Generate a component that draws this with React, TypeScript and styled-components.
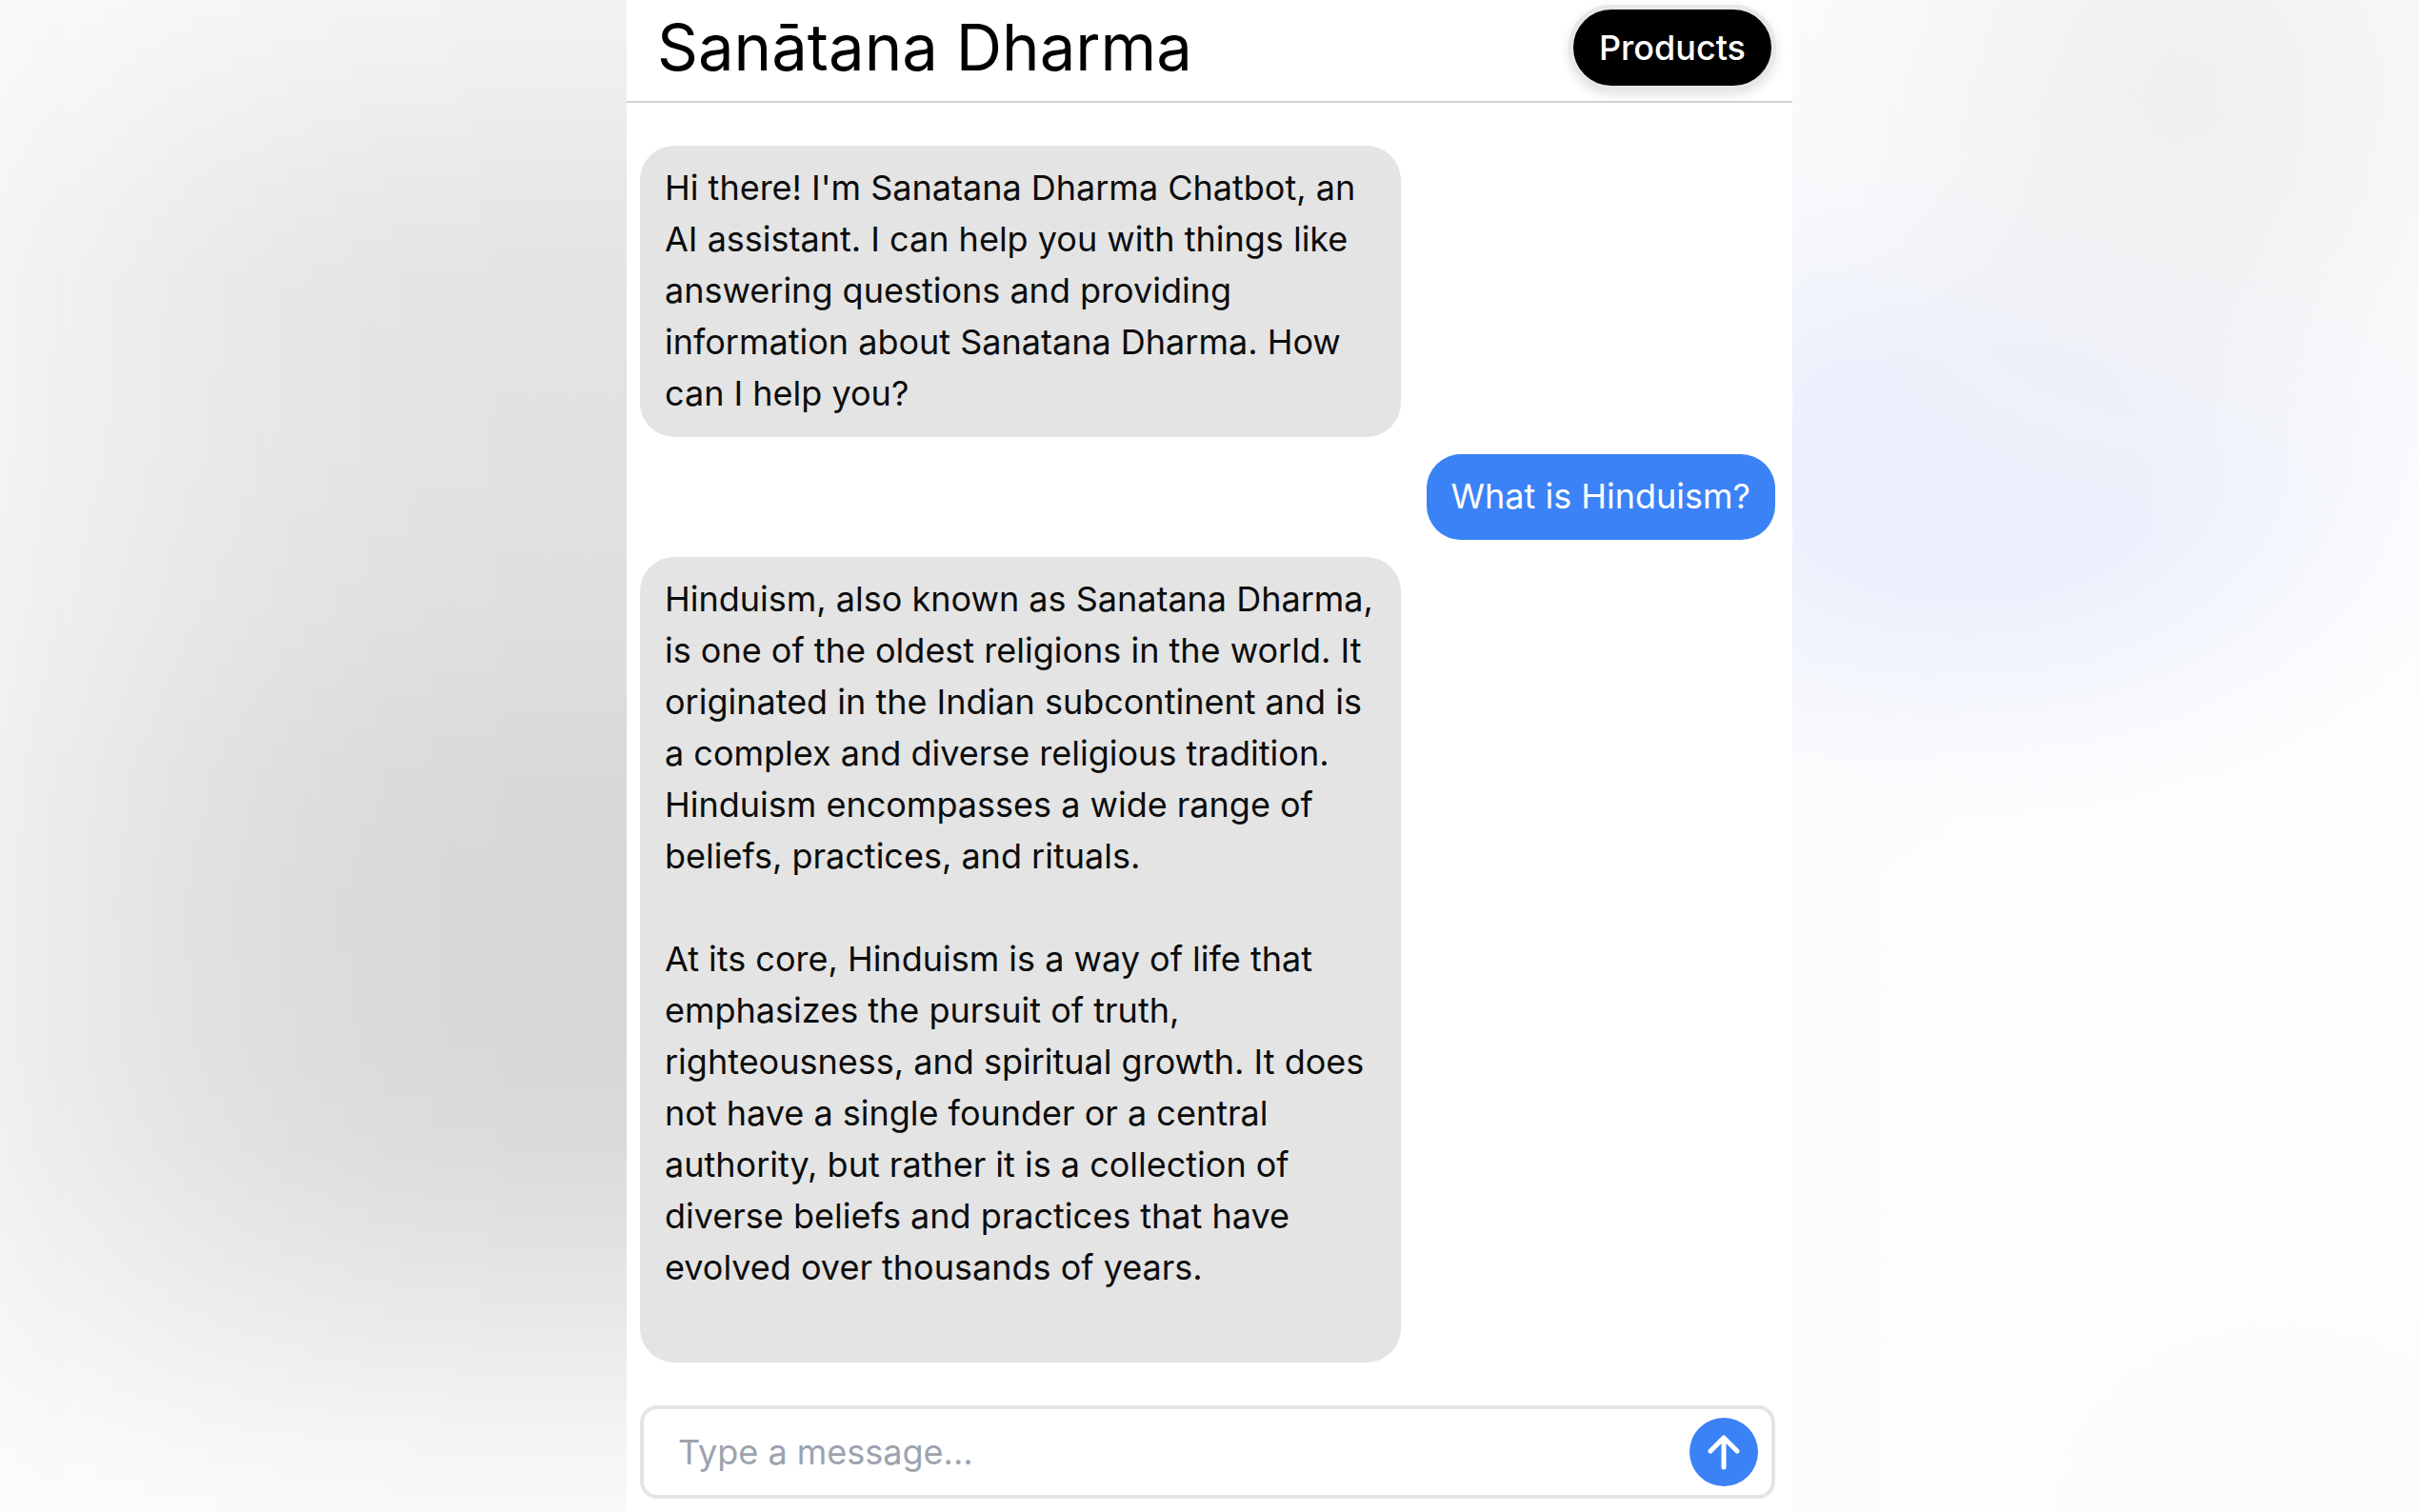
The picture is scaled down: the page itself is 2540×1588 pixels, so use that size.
import React, { useState } from "react";
import styled, { createGlobalStyle } from "styled-components";

const GlobalStyle = createGlobalStyle`
  * {
    box-sizing: border-box;
  }

  body {
    margin: 0;
    background: #fefefe;
    color: #0c0c0c;
    font-family: Inter, "Liberation Sans", sans-serif;
    font-size: 36px;
    line-height: 54px;
  }
`;

const Page = styled.div`
  display: flex;
  height: 100vh;
  overflow: hidden;
`;

const GreyGlow = styled.div`
  flex: 1 1 0;
  background: linear-gradient(
    to bottom,
    #f3f3f3 0%,
    #eeeeee 6%,
    #e8e8e8 12%,
    #e3e3e3 19%,
    #e2e2e2 30%,
    #dfdfdf 40%,
    #d9d9d9 51%,
    #d7d7d7 60%,
    #d8d8d8 70%,
    #dbdbdb 76%,
    #e3e3e3 83%,
    #ebebeb 89%,
    #f4f4f4 95%,
    #f9f9f9 100%
  );
  mask-image: linear-gradient(
    to right,
    rgba(0, 0, 0, 0.36) 0%,
    rgba(0, 0, 0, 0.56) 15%,
    rgba(0, 0, 0, 0.72) 30%,
    rgba(0, 0, 0, 0.85) 46%,
    rgba(0, 0, 0, 0.94) 62%,
    #000 85%
  );
`;

const BlueGlow = styled.div`
  flex: 1 1 0;
  background:
    radial-gradient(
      ellipse 72% 30% at 62% 6%,
      rgba(236, 236, 236, 0.8) 0%,
      rgba(238, 238, 238, 0.6) 40%,
      rgba(244, 244, 244, 0.25) 75%,
      rgba(250, 250, 250, 0) 100%
    ),
    radial-gradient(
      ellipse 100% 27% at 28% 31%,
      #eceffc 0%,
      #eceffc 28%,
      rgba(240, 243, 253, 0.8) 50%,
      rgba(246, 249, 254, 0.5) 75%,
      rgba(252, 253, 255, 0) 100%
    ),
    radial-gradient(
      ellipse 52% 18% at 78% 100%,
      #fafcfe 0%,
      #fafcfe 60%,
      rgba(252, 254, 255, 0) 100%
    ),
    linear-gradient(to right, #fbfbfb, #fefefe 30%);
`;

const Chat = styled.main`
  display: flex;
  flex-direction: column;
  width: 100%;
  max-width: 1224px;
  background: #fff;
`;

const Header = styled.header`
  display: flex;
  align-items: center;
  justify-content: space-between;
  padding: 5px 17px 11px 32px;
  border-bottom: 2px solid #d2d2d2;
`;

const Title = styled.h1`
  margin: 0;
  color: #000;
  font-size: 67px;
  font-weight: 400;
  line-height: 90px;
`;

const ProductsButton = styled.button`
  height: 90px;
  padding: 0 27px;
  border: 5px solid #e5e7eb;
  border-radius: 45px;
  background: #000;
  box-shadow: 0 4px 12px rgba(0, 0, 0, 0.12);
  color: #fff;
  font: inherit;
  font-weight: 500;
  cursor: pointer;
`;

const Messages = styled.section`
  display: flex;
  flex: 1 1 0;
  flex-direction: column;
  gap: 18px;
  min-height: 0;
  padding: 45px 18px 0 14px;
  overflow: hidden;
`;

const Bubble = styled.p<{ $mine?: boolean }>`
  flex: none;
  align-self: ${({ $mine }) => ($mine ? "flex-end" : "flex-start")};
  max-width: 67%;
  margin: 0;
  padding: 17px 26px 19px;
  border-radius: 36px;
  background: ${({ $mine }) => ($mine ? "#3b82f6" : "#e4e4e4")};
  color: ${({ $mine }) => ($mine ? "#fff" : "inherit")};
  white-space: pre-wrap;
`;

const Composer = styled.form`
  display: flex;
  align-items: center;
  margin: 0 18px 14px 14px;
  padding: 9px 14px 9px 36px;
  border: 4px solid #e4e4e4;
  border-radius: 18px;
  background: #fff;
`;

const MessageInput = styled.input`
  flex: 1;
  min-width: 0;
  padding: 0;
  border: 0;
  outline: 0;
  background: transparent;
  color: inherit;
  font: inherit;

  &::placeholder {
    color: #9ca3af;
    opacity: 1;
  }
`;

const SendButton = styled.button`
  display: grid;
  place-items: center;
  width: 72px;
  height: 72px;
  padding: 0;
  border: 0;
  border-radius: 50%;
  background: #3b82f6;
  color: #fff;
  cursor: pointer;
`;

type Message = { id: number; mine: boolean; text: string };

const conversation: Message[] = [
  {
    id: 1,
    mine: false,
    text: "Hi there! I'm Sanatana Dharma Chatbot, an AI assistant. I can help you with things like answering questions and providing information about Sanatana Dharma. How can I help you?",
  },
  { id: 2, mine: true, text: "What is Hinduism?" },
  {
    id: 3,
    mine: false,
    text: "Hinduism, also known as Sanatana Dharma, is one of the oldest religions in the world. It originated in the Indian subcontinent and is a complex and diverse religious tradition. Hinduism encompasses a wide range of beliefs, practices, and rituals.\n\nAt its core, Hinduism is a way of life that emphasizes the pursuit of truth, righteousness, and spiritual growth. It does not have a single founder or a central authority, but rather it is a collection of diverse beliefs and practices that have evolved over thousands of years.\n\n",
  },
];

function SendIcon() {
  return (
    <svg
      width="36"
      height="40"
      viewBox="0 0 36 40"
      fill="none"
      stroke="currentColor"
      strokeWidth="5"
      strokeLinecap="round"
      strokeLinejoin="round"
      aria-hidden="true"
    >
      <path d="M18 36V5M4 19 18 5l14 14" />
    </svg>
  );
}

export default function App() {
  const [messages, setMessages] = useState(conversation);
  const [draft, setDraft] = useState("");

  const send = (event: React.FormEvent) => {
    event.preventDefault();
    const text = draft.trim();
    if (!text) return;
    setMessages([...messages, { id: messages.length + 1, mine: true, text }]);
    setDraft("");
  };

  return (
    <>
      <GlobalStyle />
      <Page>
        <GreyGlow />
        <Chat>
          <Header>
            <Title>Sanātana Dharma</Title>
            <ProductsButton type="button">Products</ProductsButton>
          </Header>
          <Messages>
            {messages.map((message) => (
              <Bubble key={message.id} $mine={message.mine}>
                {message.text}
              </Bubble>
            ))}
          </Messages>
          <Composer onSubmit={send}>
            <MessageInput
              aria-label="Message"
              placeholder="Type a message..."
              value={draft}
              onChange={(event) => setDraft(event.target.value)}
            />
            <SendButton type="submit" aria-label="Send message">
              <SendIcon />
            </SendButton>
          </Composer>
        </Chat>
        <BlueGlow />
      </Page>
    </>
  );
}
